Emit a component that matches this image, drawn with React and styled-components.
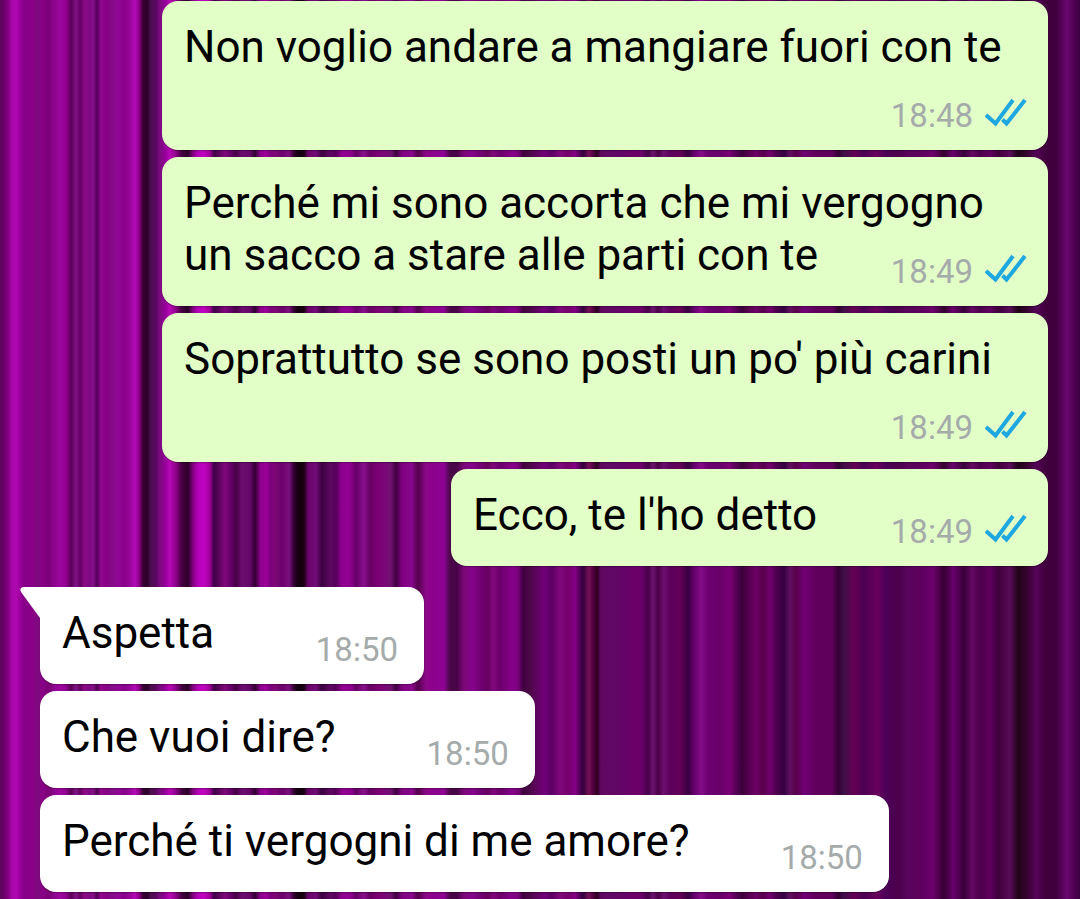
import React from "react";
import styled, { createGlobalStyle } from "styled-components";

const stripes = [
  [0, "#5a0a5e"], [4, "#6a0068"], [8, "#820080"], [12, "#a80aac"], [16, "#b208b2"], [20, "#9c009c"], [24, "#860088"],
  [32, "#8a0088"], [38, "#7c0a7e"], [42, "#8a0088"], [48, "#7c0078"], [54, "#8c048a"], [60, "#9c08a0"], [66, "#920090"],
  [71, "#5a0058"], [76, "#801484"], [80, "#660064"], [85, "#8c0c86"], [90, "#7c0a80"], [93, "#86108a"], [97, "#540058"],
  [101, "#900890"], [106, "#880084"], [112, "#860a88"], [118, "#900894"], [124, "#88008a"], [130, "#98069a"], [135, "#b40cb8"],
  [139, "#90008c"], [143, "#3a0034"], [147, "#2c0028"], [151, "#4c1050"], [156, "#5a0660"], [160, "#7c0c80"], [165, "#940098"],
  [170, "#b808b4"], [176, "#8c0088"], [182, "#440040"], [188, "#2c0028"], [193, "#840082"], [198, "#b400b8"], [204, "#c004c0"],
  [210, "#a00098"], [214, "#400048"], [219, "#5c045c"], [225, "#80087c"], [231, "#640068"], [236, "#4a0048"], [242, "#6c0c70"],
  [250, "#66086a"], [255, "#300030"], [260, "#880088"], [266, "#9c009c"], [270, "#800080"], [276, "#7c0874"], [282, "#6c006c"],
  [289, "#7a107e"], [294, "#340030"], [298, "#140010"], [304, "#180010"], [308, "#6a0468"], [316, "#720c78"], [322, "#3c0040"],
  [330, "#5c0860"], [336, "#58005c"], [342, "#900090"], [350, "#900090"], [356, "#680068"], [364, "#86108c"], [370, "#680064"],
  [378, "#7c0074"], [386, "#780878"], [391, "#701070"], [396, "#400040"], [402, "#800080"], [412, "#88088c"], [418, "#54004c"],
  [426, "#8c0888"], [434, "#8c008c"], [444, "#8c0494"], [450, "#4a0848"], [457, "#480448"], [464, "#7c0878"], [472, "#84048a"],
  [482, "#700070"], [488, "#680060"], [493, "#80087c"], [500, "#6c006c"], [512, "#840088"], [518, "#7c007c"], [523, "#400040"],
  [530, "#4c0848"], [536, "#5c045c"], [544, "#700078"], [552, "#5c0064"], [560, "#80087c"], [568, "#74006c"], [575, "#840084"],
  [583, "#34003c"], [589, "#741058"], [593, "#540040"], [597, "#2c0020"], [601, "#600860"], [612, "#600864"], [624, "#640468"],
  [634, "#6c0068"], [642, "#680068"], [648, "#480048"], [653, "#6c1470"], [658, "#4c0048"], [664, "#6c1070"], [670, "#5c005c"],
  [680, "#640058"], [688, "#380040"], [694, "#64006c"], [701, "#840c88"], [708, "#6c0070"], [720, "#680068"], [730, "#780074"],
  [736, "#580058"], [742, "#3c003c"], [748, "#54004c"], [756, "#6c0068"], [763, "#58004c"], [770, "#70006c"], [776, "#500050"],
  [784, "#340040"], [790, "#601060"], [796, "#58004c"], [804, "#700074"], [816, "#60005c"], [832, "#60005c"], [838, "#340034"],
  [844, "#401048"], [854, "#640054"], [864, "#4c0054"], [877, "#68005c"], [886, "#4c0058"], [898, "#4c004c"], [908, "#58045c"],
  [920, "#5c005c"], [933, "#6c006c"], [944, "#340030"], [953, "#68006c"], [964, "#380038"], [972, "#640864"], [980, "#4c004c"],
  [990, "#600060"], [998, "#40003c"], [1010, "#580c58"], [1018, "#200418"], [1026, "#34042c"], [1036, "#540458"], [1046, "#40003c"],
  [1056, "#400040"], [1067, "#680870"], [1074, "#500050"], [1080, "#3c0040"],
];

const GlobalStyle = createGlobalStyle`
  * { box-sizing: border-box; }
  body { margin: 0; background: #4c004c; }
`;

const Wallpaper = styled.main`
  min-height: 100vh;
  padding: 1px 32px 7px 40px;
  font-family: Roboto, "Liberation Sans", sans-serif;
  background: linear-gradient(to right, ${stripes.map(([x, c]) => `${c} ${x}px`).join(", ")});
`;

const Thread = styled.section`
  display: flex;
  flex-direction: column;
  gap: 7px;
  align-items: ${(p) => (p.$side === "out" ? "flex-end" : "flex-start")};
  & + & { margin-top: 21px; }
`;

const Bubble = styled.article`
  display: flow-root;
  position: relative;
  min-width: ${(p) => (p.$side === "out" ? 597 : 384)}px;
  max-width: calc(100% - 122px);
  padding: ${(p) => (p.$side === "out" ? "20px 21px 14px 22px" : "20px 26px 14px 22px")};
  border-radius: ${(p) => (p.$tail ? "0 16px 16px 16px" : "16px")};
  background: ${(p) => (p.$side === "out" ? "#e1ffc7" : "#ffffff")};
  box-shadow: 0 1px 1px rgba(0, 0, 0, 0.3);
`;

const Tail = styled.svg`
  position: absolute;
  top: 0;
  left: -20px;
  width: 21px;
  height: 31px;
`;

const Text = styled.span`
  font-size: 44px;
  line-height: 52px;
  color: #000;
`;

const Meta = styled.span`
  float: right;
  display: flex;
  align-items: center;
  gap: 12px;
  height: 40px;
  margin: 23px 0 0 ${(p) => (p.$side === "out" ? 68 : 91)}px;
`;

const Time = styled.time`
  font-size: 33px;
  line-height: 40px;
  color: #a5abaa;
`;

const Ticks = styled.svg`
  width: 42px;
  height: 40px;
`;

function ReadTicks() {
  return (
    <Ticks viewBox="0 0 42 40" role="img" aria-label="Letto" fill="none" stroke="#1fa7e0" strokeWidth="4">
      <path d="M1 19 L10.5 27.5 L28 4" />
      <path d="M17.5 23.5 L21.5 27.5 L40 4" />
    </Ticks>
  );
}

function Message({ side, time, tail, children }) {
  return (
    <Bubble $side={side} $tail={tail}>
      {tail && (
        <Tail viewBox="0 0 21 31" aria-hidden="true">
          <path d="M21 0 H3 Q-1 1 1 5 L20 31 H21 Z" fill="#fff" />
        </Tail>
      )}
      <Text>{children}</Text>
      <Meta $side={side}>
        <Time>{time}</Time>
        {side === "out" && <ReadTicks />}
      </Meta>
    </Bubble>
  );
}

export default function App() {
  return (
    <>
      <GlobalStyle />
      <Wallpaper>
        <Thread $side="out">
          <Message side="out" time="18:48">Non voglio andare a mangiare fuori con te</Message>
          <Message side="out" time="18:49">Perché mi sono accorta che mi vergogno un sacco a stare alle parti con te</Message>
          <Message side="out" time="18:49">Soprattutto se sono posti un po' più carini</Message>
          <Message side="out" time="18:49">Ecco, te l'ho detto</Message>
        </Thread>
        <Thread $side="in">
          <Message side="in" time="18:50" tail>Aspetta</Message>
          <Message side="in" time="18:50">Che vuoi dire?</Message>
          <Message side="in" time="18:50">Perché ti vergogni di me amore?</Message>
        </Thread>
      </Wallpaper>
    </>
  );
}
